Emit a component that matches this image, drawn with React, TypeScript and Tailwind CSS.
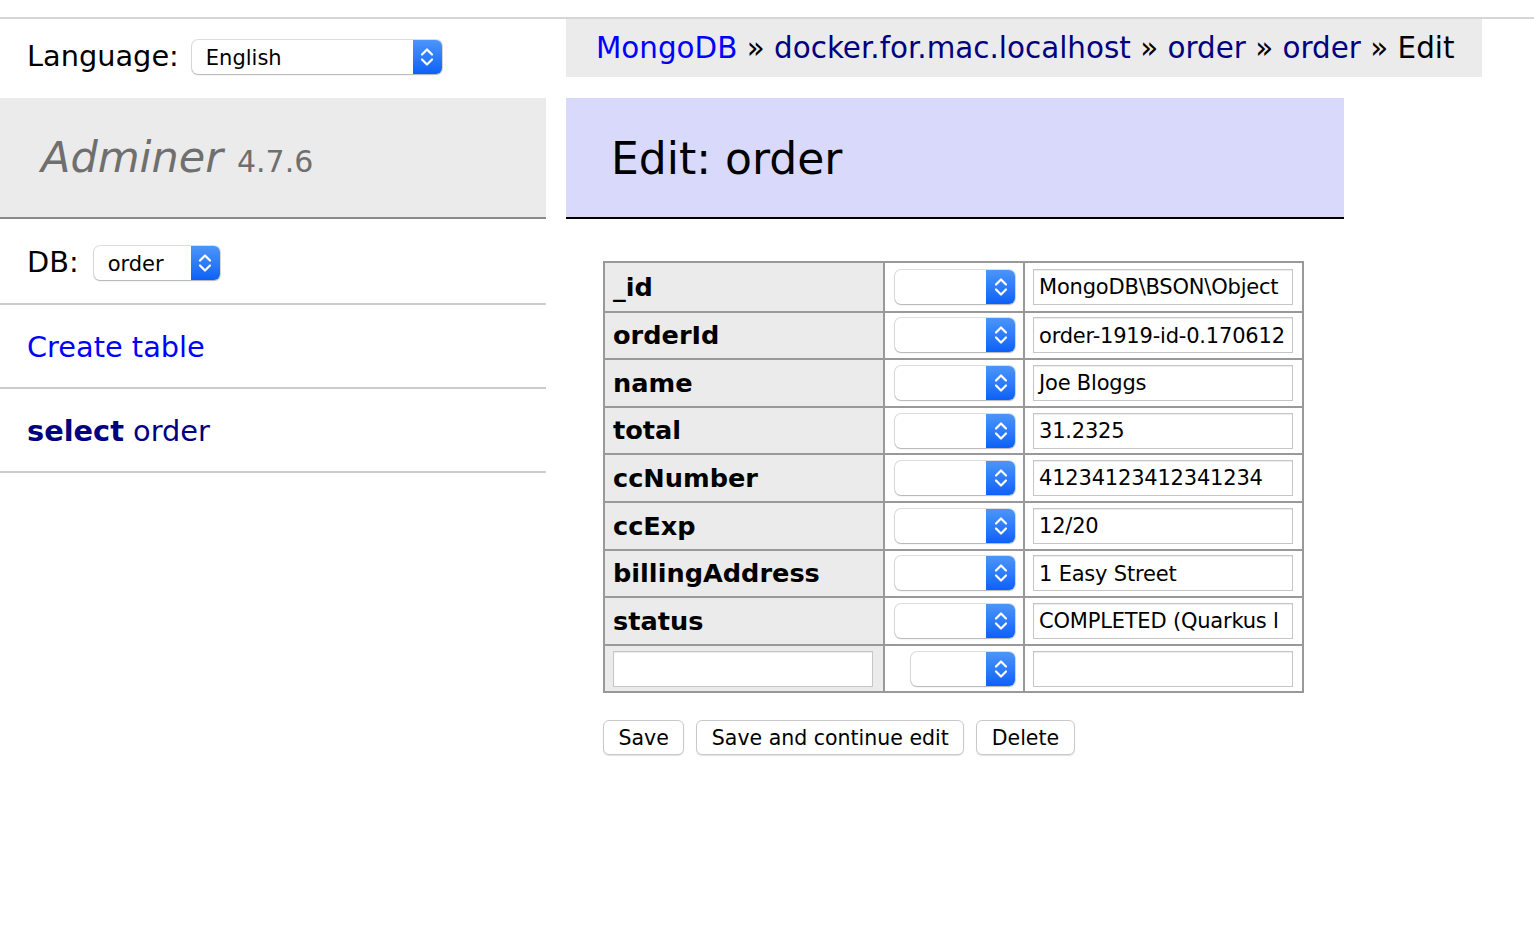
import React from "react";

const fields = [
  { name: "_id", value: "MongoDB\\BSON\\Object" },
  { name: "orderId", value: "order-1919-id-0.170612" },
  { name: "name", value: "Joe Bloggs" },
  { name: "total", value: "31.2325" },
  { name: "ccNumber", value: "41234123412341234" },
  { name: "ccExp", value: "12/20" },
  { name: "billingAddress", value: "1 Easy Street" },
  { name: "status", value: "COMPLETED (Quarkus l" },
];

const Chevrons = () => (
  <svg width="16" height="26" viewBox="0 0 16 26" fill="none" stroke="white" strokeWidth="2.2" strokeLinecap="round" strokeLinejoin="round">
    <polyline points="3 10.5 8 5.5 13 10.5" />
    <polyline points="3 15.5 8 20.5 13 15.5" />
  </svg>
);

function MacSelect({ className, value }: { className: string; value?: string }) {
  return (
    <div className={`flex h-[34px] shrink-0 overflow-hidden rounded-[6px] bg-white shadow-[0_0_0_1px_rgba(0,0,0,0.13),0_1px_1.5px_rgba(0,0,0,0.2)] ${className}`}>
      <div className="flex flex-1 items-center pl-[14px] pt-[3px] text-[21px] text-black">{value}</div>
      <div className="flex w-[29px] items-center justify-center bg-gradient-to-b from-[#4b95fb] to-[#0b61f7]">
        <Chevrons />
      </div>
    </div>
  );
}

function TextInput({ value }: { value?: string }) {
  return (
    <div className="flex h-[36px] w-[260px] items-center overflow-hidden whitespace-nowrap border border-[#c6c6c6] bg-white pl-[5px] pt-[2px] text-[21px] tracking-[-0.2px] text-black shadow-[inset_0_1px_1px_rgba(0,0,0,0.08)]">
      {value}
    </div>
  );
}

function Sidebar() {
  return (
    <div className="w-[546px] shrink-0">
      <div className="flex h-[79px] items-center gap-[13px] pb-[3px] pl-[27px]">
        <span className="text-[28.8px] text-black">Language:</span>
        <MacSelect className="w-[250px]" value="English" />
      </div>
      <div className="flex h-[121px] items-center border-b-2 border-[#8a8a8a] bg-[#ebebeb] pl-[41px]">
        <span className="text-[43px] italic text-[#6f6f6f]">Adminer</span>
        <span className="ml-[14px] mt-[8px] text-[30px] text-[#6f6f6f]">4.7.6</span>
      </div>
      <div className="flex h-[86px] items-center gap-[15px] border-b-2 border-[#cccccc] pl-[27px] pt-[4px]">
        <span className="text-[28.8px] text-black">DB:</span>
        <MacSelect className="w-[126px]" value="order" />
      </div>
      <div className="flex h-[84px] items-center border-b-2 border-[#cccccc] pl-[27px] pt-[3px]">
        <a className="text-[28.8px] text-[#0000ff]">Create table</a>
      </div>
      <div className="flex h-[84px] items-center border-b-2 border-[#cccccc] pl-[27px] pt-[3px]">
        <a className="text-[28.8px] text-[#000080]">
          <b>select</b> order
        </a>
      </div>
    </div>
  );
}

export default function App() {
  return (
    <div className="min-h-[944px] bg-white font-['DejaVu_Sans',Verdana,sans-serif] text-black">
      <div className="h-[19px] border-b-2 border-[#d6d6d6]" />
      <div className="flex">
        <Sidebar />
        <div className="ml-[20px] flex-1">
          <div className="flex h-[58px] w-[916px] items-center bg-[#ebebeb] pl-[30px] text-[29.4px]">
            <a className="text-[#0000ff]">MongoDB</a>
            <span className="whitespace-pre"> » </span>
            <a className="text-[#000080]">docker.for.mac.localhost</a>
            <span className="whitespace-pre"> » </span>
            <a className="text-[#000080]">order</a>
            <span className="whitespace-pre"> » </span>
            <a className="text-[#000080]">order</a>
            <span className="whitespace-pre"> » Edit</span>
          </div>
          <div className="mt-[21px] flex h-[121px] w-[778px] items-center border-b-2 border-black bg-[#d9d9fb] pl-[45px] pt-[2px]">
            <h2 className="text-[44px] text-black">Edit: order</h2>
          </div>

          <div className="ml-[37px] mt-[42px] w-[701px] border-2 border-[#999999]">
            {fields.map((f, i) => (
              <div key={f.name} className={`flex h-[47.6px] ${i > 0 ? "border-t-2 border-[#999999]" : ""}`}>
                <div className="flex w-[278px] items-center bg-[#ebebeb] pl-[8px] text-[25.6px] font-bold">{f.name}</div>
                <div className="flex w-[140px] items-center border-l-2 border-[#999999] pl-[10px]">
                  <MacSelect className="w-[120px]" />
                </div>
                <div className="flex flex-1 items-center border-l-2 border-[#999999] pl-[8px]">
                  <TextInput value={f.value} />
                </div>
              </div>
            ))}
            <div className="flex h-[47.6px] border-t-2 border-[#999999]">
              <div className="flex w-[278px] items-center bg-[#ebebeb] pl-[8px]">
                <TextInput />
              </div>
              <div className="flex w-[140px] items-center justify-end border-l-2 border-[#999999] pr-[8px]">
                <MacSelect className="w-[104px]" />
              </div>
              <div className="flex flex-1 items-center border-l-2 border-[#999999] pl-[8px]">
                <TextInput />
              </div>
            </div>
          </div>

          <div className="ml-[37px] mt-[27px] flex gap-[12px]">
            {["Save", "Save and continue edit", "Delete"].map((b) => (
              <button
                key={b}
                className="h-[35px] rounded-[6px] border border-[#c9c9c9] bg-white px-[14.5px] pt-[2px] text-[20.5px] text-black shadow-[0_1px_1px_rgba(0,0,0,0.12)]"
              >
                {b}
              </button>
            ))}
          </div>
        </div>
      </div>
    </div>
  );
}
